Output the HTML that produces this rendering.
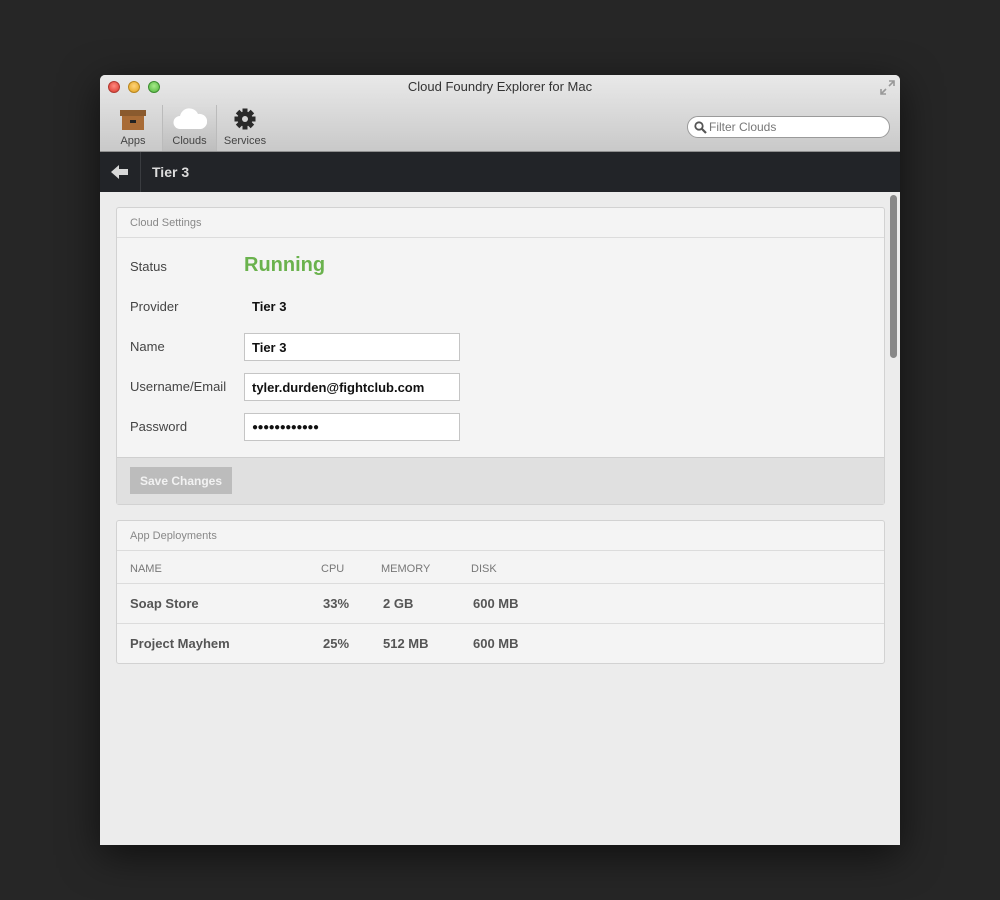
<!DOCTYPE html>
<html><head><meta charset="utf-8"><style>
*{box-sizing:border-box;margin:0;padding:0}
body{width:1000px;height:900px;background:#262626;font-family:"Liberation Sans",sans-serif;position:relative;overflow:hidden}
.win{position:absolute;left:100px;top:75px;width:800px;height:770px;background:#ececec;border-radius:5px 5px 0 0;overflow:hidden;box-shadow:0 10px 40px rgba(0,0,0,.6)}
.tb{position:absolute;left:0;top:0;width:800px;height:77px;background:linear-gradient(#e9e9e9,#c9c9c9);border-bottom:1px solid #8f8f8f}
.title{position:absolute;top:4px;width:100%;text-align:center;font-size:13px;color:#333}
.dot{position:absolute;top:6px;width:12px;height:12px;border-radius:50%}
.tool{position:absolute;top:30px;text-align:center;font-size:11px;color:#444;height:46px}
.nav{position:absolute;top:77px;left:0;width:800px;height:40px;background:#222428}
.card{position:absolute;left:16px;width:769px;background:#f4f4f4;border:1px solid #d2d2d2;border-radius:3px}
.hd{height:30px;border-bottom:1px solid #dcdcdc;font-size:11px;color:#888;padding:9px 0 0 13px}
.lbl{position:absolute;left:13px;font-size:13px;color:#444}
.inp{position:absolute;left:127px;width:216px;height:28px;background:#fff;border:1px solid #c5c5c5;font-size:13px;font-weight:bold;color:#111;padding:6px 0 0 7px}
.row{position:absolute;left:0;width:100%;border-top:1px solid #dcdcdc;font-size:13px;font-weight:bold;color:#555}
.row span,.ch span{position:absolute}
.ch{position:absolute;left:0;width:100%;font-size:11px;color:#777}
</style></head><body>
<div class="win">
 <div class="tb">
  <div class="title">Cloud Foundry Explorer for Mac</div>
  <div class="dot" style="left:8px;background:radial-gradient(circle at 50% 40%,#ff8a80,#d8352a);border:1px solid #b03a32"></div>
  <div class="dot" style="left:28px;background:radial-gradient(circle at 50% 40%,#ffd37a,#e0a21c);border:1px solid #b88620"></div>
  <div class="dot" style="left:48px;background:radial-gradient(circle at 50% 40%,#a6ea8a,#4fb43a);border:1px solid #3d8c30"></div>
  <svg style="position:absolute;left:780px;top:5px" width="15" height="15" viewBox="0 0 15 15"><path d="M9 1h5v5M14 1l-5 5M6 14H1V9M1 14l5-5" stroke="#999" stroke-width="1.6" fill="none"/></svg>
  <div class="tool" style="left:14px;width:38px">
   <svg width="28" height="24" viewBox="0 0 28 24" style="display:block;margin:3px auto 0"><rect x="1" y="2" width="26" height="6" fill="#8a5a2e"/><rect x="3" y="8" width="22" height="14" fill="#a86b36"/><rect x="11" y="12" width="6" height="3" fill="#222"/></svg>
   <div style="margin-top:3px">Apps</div></div>
  <div class="tool" style="left:62px;width:55px;background:linear-gradient(rgba(0,0,0,0),rgba(0,0,0,.06));border-left:1px solid #bbb;border-right:1px solid #bbb">
   <svg width="34" height="24" viewBox="0 0 34 24" style="display:block;margin:2px auto 0"><path d="M7 22a6.5 6.5 0 0 1 0-13a9.5 9.5 0 0 1 18-2a7.5 7.5 0 0 1 3 15z" fill="#fff"/></svg>
   <div style="margin-top:4px">Clouds</div></div>
  <div class="tool" style="left:122px;width:46px">
   <svg width="24" height="24" viewBox="0 0 24 24" style="display:block;margin:2px auto 0"><g fill="#2a2a2a"><circle cx="12" cy="12" r="7.5"/><rect x="9.5" y="1.5" width="5" height="21"/><rect x="9.5" y="1.5" width="5" height="21" transform="rotate(45 12 12)"/><rect x="9.5" y="1.5" width="5" height="21" transform="rotate(90 12 12)"/><rect x="9.5" y="1.5" width="5" height="21" transform="rotate(135 12 12)"/></g><circle cx="12" cy="12" r="3" fill="#d6d6d6"/></svg>
   <div style="margin-top:4px">Services</div></div>
  <div style="position:absolute;left:587px;top:41px;width:203px;height:22px;background:#fff;border:1px solid #9a9a9a;border-radius:11px;font-size:12px;color:#777;padding:3px 0 0 21px">
   <svg style="position:absolute;left:6px;top:4px" width="13" height="13" viewBox="0 0 13 13"><circle cx="5" cy="5" r="3.7" stroke="#555" stroke-width="1.8" fill="none"/><path d="M8 8l4 4" stroke="#555" stroke-width="2.2"/></svg>Filter Clouds</div>
 </div>
 <div class="nav">
  <svg style="position:absolute;left:10px;top:12px" width="20" height="16" viewBox="0 0 20 16"><path d="M1 8L9 1v4h9v6H9v4z" fill="#d8d8d8"/></svg>
  <div style="position:absolute;left:40px;top:0;width:1px;height:40px;background:#3a3c40"></div>
  <div style="position:absolute;left:52px;top:12px;font-size:14px;font-weight:bold;color:#ddd">Tier 3</div>
 </div>
 <div style="position:absolute;left:790px;top:120px;width:7px;height:163px;background:#888;border-radius:4px"></div>
 <div class="card" style="top:132px;height:298px">
  <div class="hd">Cloud Settings</div>
  <div class="lbl" style="top:51px">Status</div>
  <div style="position:absolute;left:127px;top:46px;font-size:20px;font-weight:bold;color:#6ab24d">Running</div>
  <div class="lbl" style="top:91px">Provider</div>
  <div style="position:absolute;left:135px;top:91px;font-size:13px;font-weight:bold;color:#111">Tier 3</div>
  <div class="lbl" style="top:131px">Name</div><div class="inp" style="top:125px">Tier 3</div>
  <div class="lbl" style="top:171px">Username/Email</div><div class="inp" style="top:165px">tyler.durden@fightclub.com</div>
  <div class="lbl" style="top:211px">Password</div><div class="inp" style="top:205px;font-size:10px;padding-top:8px;letter-spacing:-0.5px">●●●●●●●●●●●●</div>
  <div style="position:absolute;left:0;top:249px;width:100%;height:47px;background:#e0e0e0;border-top:1px solid #cfcfcf">
   <div style="position:absolute;left:13px;top:9px;width:102px;height:27px;background:#bcbcbc;color:#f2f2f2;font-size:12px;font-weight:bold;text-align:center;padding-top:7px">Save Changes</div></div>
 </div>
 <div class="card" style="top:445px;height:144px">
  <div class="hd">App Deployments</div>
  <div class="ch" style="top:42px"><span style="left:13px">NAME</span><span style="left:204px">CPU</span><span style="left:264px">MEMORY</span><span style="left:354px">DISK</span></div>
  <div class="row" style="top:62px;height:40px"><span style="left:13px;top:12px">Soap Store</span><span style="left:206px;top:12px">33%</span><span style="left:266px;top:12px">2 GB</span><span style="left:356px;top:12px">600 MB</span></div>
  <div class="row" style="top:102px;height:40px"><span style="left:13px;top:12px">Project Mayhem</span><span style="left:206px;top:12px">25%</span><span style="left:266px;top:12px">512 MB</span><span style="left:356px;top:12px">600 MB</span></div>
 </div>
</div>
</body></html>
